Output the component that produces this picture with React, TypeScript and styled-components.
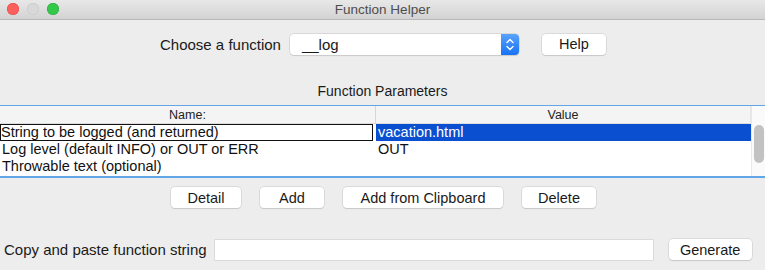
import styled, { createGlobalStyle } from 'styled-components'

const GlobalStyle = createGlobalStyle`
  html, body {
    margin: 0;
    padding: 0;
    background: #ededed;
  }
  body {
    font-family: "Liberation Sans", Arial, sans-serif;
    font-size: 13px;
    color: #1a1a1a;
  }
`

const Window = styled.div`
  width: 765px;
  height: 270px;
  background: #ededed;
  display: flex;
  flex-direction: column;
  overflow: hidden;
`

const TitleBar = styled.div`
  height: 19px;
  display: flex;
  align-items: center;
  justify-content: center;
  position: relative;
  background: linear-gradient(#e8e8e8, #d3d3d3);
  border-bottom: 1px solid #b9b9b9;
  color: #4d4d4d;
  font-size: 13.5px;
`

const Lights = styled.div`
  position: absolute;
  left: 7px;
  top: 3px;
  display: flex;
  gap: 8px;
`

const Light = styled.span<{ $color: string; $edge: string }>`
  width: 12px;
  height: 12px;
  border-radius: 50%;
  background: ${p => p.$color};
  box-shadow: inset 0 0 0 0.5px ${p => p.$edge};
`

const ChooseRow = styled.div`
  display: flex;
  align-items: center;
  margin-top: 13px;
  padding-left: 160px;
  height: 22px;
`

const Label = styled.span<{ $size?: number }>`
  font-size: ${p => p.$size ?? 15}px;
  color: #1a1a1a;
  white-space: nowrap;
`

const Combo = styled.div`
  margin-left: 9px;
  width: 229px;
  height: 21px;
  display: flex;
  background: #fff;
  border-radius: 4px;
  box-shadow: 0 0 0 0.5px #c4c4c4, 0 1px 1px rgba(0, 0, 0, 0.12);
  overflow: hidden;
`

const ComboText = styled.div`
  flex: 1;
  padding-left: 12px;
  font-size: 15px;
  line-height: 21px;
`

const Stepper = styled.div`
  width: 18px;
  background: linear-gradient(#5aa3fb, #1872f5);
  display: flex;
  align-items: center;
  justify-content: center;
`

const Button = styled.button<{ $w: number }>`
  width: ${p => p.$w}px;
  height: 21px;
  padding: 0;
  background: #fff;
  border: none;
  border-radius: 4px;
  box-shadow: 0 0 0 0.5px #c8c8c8, 0 1px 1px rgba(0, 0, 0, 0.15);
  font-family: "Liberation Sans", Arial, sans-serif;
  font-size: 14.5px;
  color: #1a1a1a;
`

const HelpButton = styled(Button)`
  margin-left: 23px;
`

const SectionTitle = styled.div`
  margin-top: 28px;
  text-align: center;
  font-size: 14px;
  line-height: 17px;
`

const Table = styled.div`
  margin-top: 5px;
  height: 70px;
  display: grid;
  grid-template-columns: 1fr 14px;
  background: #fff;
  border-top: 1px solid #63a6e8;
  border-bottom: 2px solid #63a6e8;
`

const TableMain = styled.div`
  display: flex;
  flex-direction: column;
`

const Cols = styled.div`
  display: grid;
  grid-template-columns: 376px 1fr;
`

const Header = styled(Cols)`
  height: 17px;
  background: #f4f4f4;
  border-bottom: 1px solid #dcdcdc;
`

const HeadCell = styled.div<{ $last?: boolean }>`
  text-align: center;
  font-size: 12.5px;
  line-height: 18px;
  color: #222;
  border-right: 1px solid ${p => (p.$last ? '#e6e6e6' : '#d6d6d6')};
`

const Row = styled(Cols)`
  height: 17px;
`

const Cell = styled.div<{ $focus?: boolean; $selected?: boolean }>`
  font-size: 14.5px;
  line-height: 15px;
  padding-left: ${p => (p.$focus ? '0' : '1px')};
  margin-right: ${p => (p.$focus ? '3px' : '0')};
  white-space: nowrap;
  overflow: hidden;
  border: 1px solid ${p => (p.$focus ? '#111' : 'transparent')};
  background: ${p => (p.$selected ? '#0a4fcf' : 'transparent')};
  color: ${p => (p.$selected ? '#fff' : '#111')};
`

const ScrollTrack = styled.div`
  background: #fafafa;
  border-left: 1px solid #e8e8e8;
  padding: 19px 1px 0 2px;
`

const Thumb = styled.div`
  height: 38px;
  border-radius: 5px;
  background: #c2c2c2;
`

const ButtonRow = styled.div`
  margin-top: 9px;
  display: flex;
  gap: 19px;
  padding-left: 171px;
`

const BottomRow = styled.div`
  margin-top: 31px;
  display: flex;
  align-items: center;
  padding-left: 4px;
`

const TextInput = styled.div`
  margin-left: 8px;
  width: 438px;
  height: 20px;
  background: #fff;
  box-shadow: 0 0 0 0.5px #c8c8c8;
`

const GenerateButton = styled(Button)`
  margin-left: 16px;
`

const App = () => {
  return (
    <>
      <GlobalStyle />
      <Window>
        <TitleBar>
          <Lights>
            <Light $color="#fc605c" $edge="#de4a45" />
            <Light $color="#d8d8d8" $edge="#c5c5c5" />
            <Light $color="#34c84a" $edge="#2aa83c" />
          </Lights>
          Function Helper
        </TitleBar>

        <ChooseRow>
          <Label>Choose a function</Label>
          <Combo>
            <ComboText>__log</ComboText>
            <Stepper>
              <svg width="8" height="13" viewBox="0 0 8 13" fill="none" stroke="#fff" strokeWidth="1.4" strokeLinecap="round" strokeLinejoin="round">
                <path d="M1 4.5 L4 1.5 L7 4.5" />
                <path d="M1 8.5 L4 11.5 L7 8.5" />
              </svg>
            </Stepper>
          </Combo>
          <HelpButton $w={64}>Help</HelpButton>
        </ChooseRow>

        <SectionTitle>Function Parameters</SectionTitle>

        <Table>
          <TableMain>
            <Header>
              <HeadCell>Name:</HeadCell>
              <HeadCell $last>Value</HeadCell>
            </Header>
            <Row>
              <Cell $focus>String to be logged (and returned)</Cell>
              <Cell $selected>vacation.html</Cell>
            </Row>
            <Row>
              <Cell>Log level (default INFO) or OUT or ERR</Cell>
              <Cell>OUT</Cell>
            </Row>
            <Row>
              <Cell>Throwable text (optional)</Cell>
              <Cell></Cell>
            </Row>
          </TableMain>
          <ScrollTrack>
            <Thumb />
          </ScrollTrack>
        </Table>

        <ButtonRow>
          <Button $w={70}>Detail</Button>
          <Button $w={64}>Add</Button>
          <Button $w={160}>Add from Clipboard</Button>
          <Button $w={74}>Delete</Button>
        </ButtonRow>

        <BottomRow>
          <Label>Copy and paste function string</Label>
          <TextInput />
          <GenerateButton $w={83}>Generate</GenerateButton>
        </BottomRow>
      </Window>
    </>
  )
}

export default App
